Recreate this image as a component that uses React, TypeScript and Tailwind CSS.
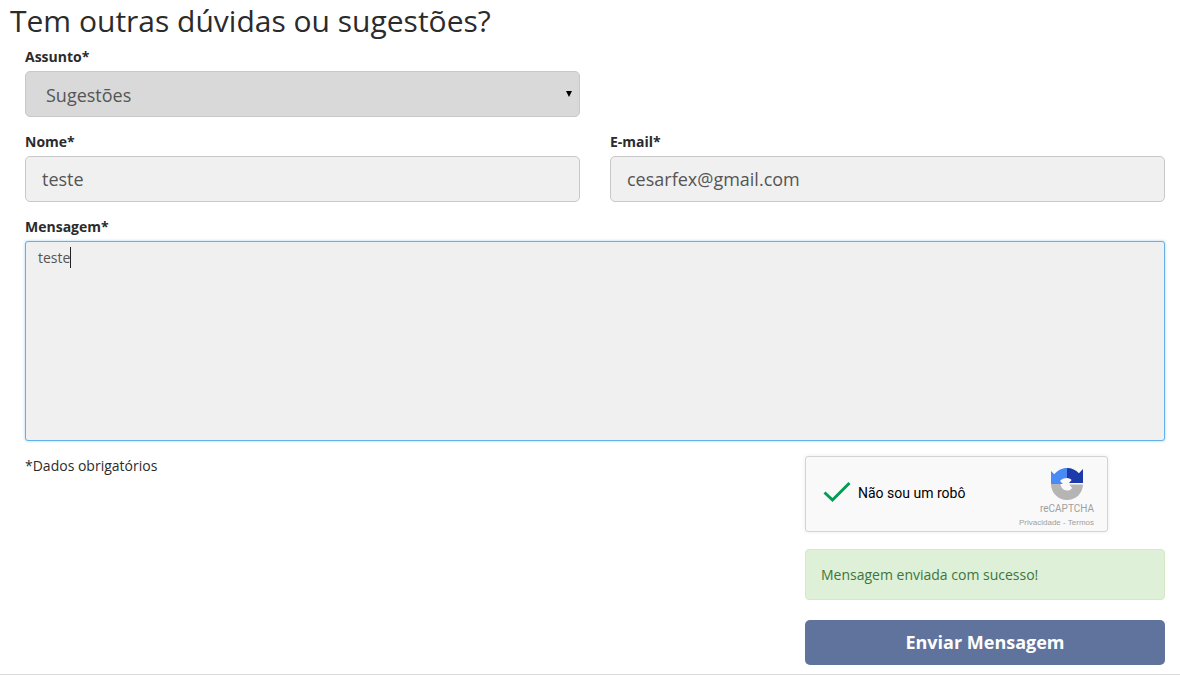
const labelClass = "block text-sm font-bold leading-5 text-[#2b2b2b]";
const inputClass =
  "h-[46px] w-full rounded-[5px] border border-[#c8c8c8] bg-[#f0f0f0] text-lg leading-[44px] text-[#555]";

function RecaptchaLogo() {
  return (
    <svg width="32" height="32" viewBox="0 0 32 32" fill="none">
      {/* gray lower half */}
      <path d="M0 16h9.500c.3 3.600 3 6.500 6.500 6.500 2.200 0 4-1 5.200-2.600l-3-3.400H32C31.700 25.500 24.700 32 16 32 7.200 32 0 24.800 0 16z" fill="#b5b5b5" />
      {/* blue upper left */}
      <path d="M16 0C10.800 0 6.200 2.500 3.300 6.300L0 3v13h12l-3-3C10.500 11.200 13 10 16 10z" fill="#4a8af4" />
      {/* dark blue upper right */}
      <path d="M16 0v10c1.800 0 3.500.8 4.700 2.100L18 15h14V1l-4.100 4.200C25 2 20.800 0 16 0z" fill="#1c3aa9" />
    </svg>
  );
}

export default function App() {
  return (
    <main className="flex h-[676px] w-[1180px] flex-col overflow-hidden bg-white font-['Open_Sans',sans-serif] text-[#2b2b2b]">
      <h1 className="h-[47px] pl-[10px] text-[30px] leading-[42px] text-[#2b2b2b]">
        Tem outras dúvidas ou sugestões?
      </h1>

      <form className="flex flex-col pl-[25px] pr-[15px]">
        {/* Assunto */}
        <div className="grid grid-cols-2 gap-[30px]">
          <div>
            <label className={labelClass}>Assunto*</label>
            <div className="mt-[4px] flex h-[46px] items-center justify-between rounded-[5px] border border-[#c8c8c8] bg-[#d9d9d9] pl-[20px] pr-[7px] text-lg text-[#555]">
              <span className="pt-[2px]">Sugestões</span>
              <span className="mb-[1px] h-0 w-0 border-x-[3px] border-t-[6px] border-x-transparent border-t-black" />
            </div>
          </div>
        </div>

        {/* Nome / E-mail */}
        <div className="mt-[15px] grid grid-cols-2 gap-[30px]">
          <div>
            <label className={labelClass}>Nome*</label>
            <div className={`mt-[4px] pl-[16px] ${inputClass}`}>teste</div>
          </div>
          <div>
            <label className={labelClass}>E-mail*</label>
            <div className={`mt-[4px] pl-[16px] ${inputClass}`}>cesarfex@gmail.com</div>
          </div>
        </div>

        {/* Mensagem */}
        <div className="mt-[15px]">
          <label className={labelClass}>Mensagem*</label>
          <div className="mt-[4px] h-[200px] rounded-[3px] border border-[#66afe9] bg-[#f0f0f0] pl-[12px] pt-[6px] text-sm leading-5 text-[#555] shadow-[0_0_3px_rgba(102,175,233,0.6)]">
            <span className="border-r border-[#222] py-px">teste</span>
          </div>
        </div>

        <div className="mt-[15px] flex justify-between">
          <p className="text-sm leading-5 text-[#2b2b2b]">*Dados obrigatórios</p>

          <div className="flex w-[360px] flex-col">
            {/* reCAPTCHA */}
            <div className="flex h-[76px] w-[303px] items-start justify-between rounded-[3px] border border-[#d3d3d3] bg-[#f9f9f9] pl-[17px] pr-[13px] font-['Roboto',sans-serif] shadow-[0_0_4px_rgba(0,0,0,0.08)]">
              <div className="mt-[23px] flex items-center gap-[7px]">
                <svg width="28" height="22" viewBox="0 0 28 22" fill="none">
                  <path d="M1.500 11.500 9.500 19 26.500 2" stroke="#009e55" strokeWidth="3" />
                </svg>
                <span className="pt-[3px] text-sm text-black">Não sou um robô</span>
              </div>
              <div className="flex flex-col pt-[11px]">
                <div className="mr-[11px] self-end">
                  <RecaptchaLogo />
                </div>
                <span className="mt-[2px] self-end text-[10px] leading-[14px] text-[#a0a0a0]">reCAPTCHA</span>
                <span className="mt-[1px] self-end font-['Liberation_Sans',sans-serif] text-[8px] leading-[12px] text-[#a0a0a0]">Privacidade - Termos</span>
              </div>
            </div>

            <div className="mt-[17px] flex h-[51px] items-center rounded-[4px] border border-[#d6e9c6] bg-[#dff0d8] pl-[15px] text-sm text-[#3c763d]">
              Mensagem enviada com sucesso!
            </div>

            <button type="button" className="mt-[20px] h-[45px] rounded-[5px] bg-[#60739c] pb-[2px] text-lg font-bold text-white">
              Enviar Mensagem
            </button>
          </div>
        </div>
      </form>

      <div className="mt-[9px] border-t border-[#d9d9d9]" />
    </main>
  );
}
